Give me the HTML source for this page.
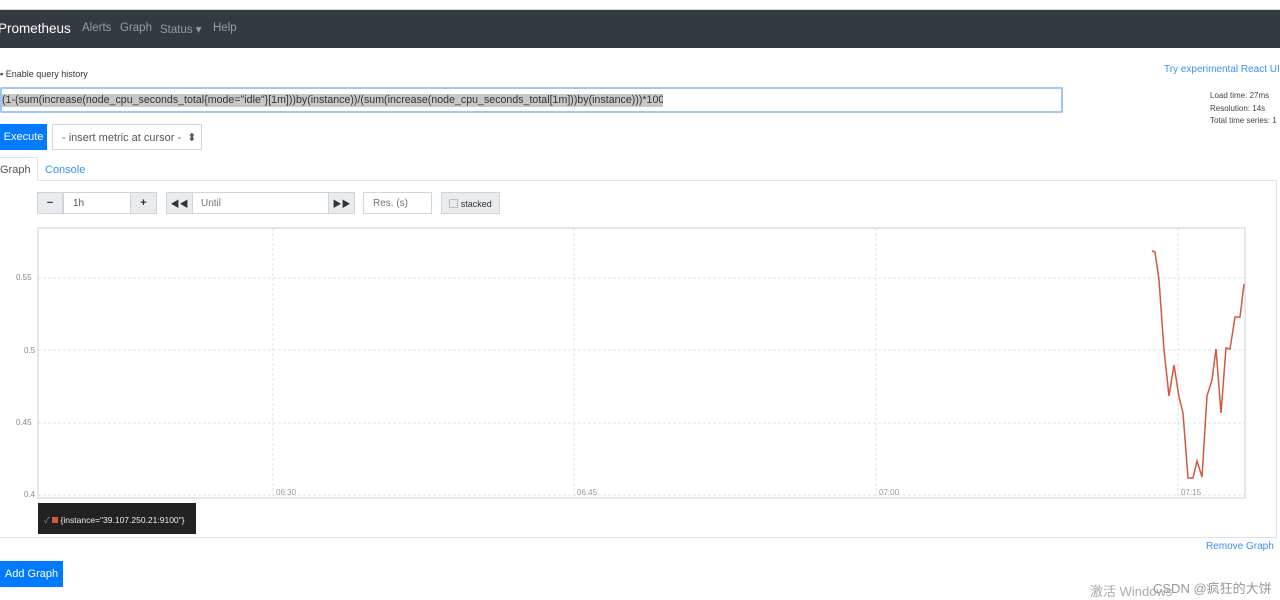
<!DOCTYPE html>
<html><head><meta charset="utf-8"><style>
*{box-sizing:border-box;margin:0;padding:0}
body{width:1280px;height:599px;overflow:hidden;background:#fff;font-family:"Liberation Sans","Noto Sans CJK SC",sans-serif;position:relative;color:#212529}
.a{position:absolute}
.nav{left:0;top:10px;width:1280px;height:38px;background:#343a40}
.nav span{position:absolute;top:12px;font-size:11.5px;color:#9a9da0}
.btn{background:#007bff;color:#fff;font-size:11px;display:flex;align-items:center;justify-content:center}
.box{border:1px solid #ced4da;background:#fff;font-size:10px;color:#6c757d;display:flex;align-items:center}
.g{background:#e9ecef;border:1px solid #ced4da;display:flex;align-items:center;justify-content:center;font-size:11px;font-weight:bold;color:#333}
.yl{font-size:8px;color:#888;left:16px}
.xl{font-size:8px;color:#999}
</style></head><body>
<div class="a" style="left:0;top:0;width:1280px;height:10px;background:#fff;border-bottom:1px solid #ddd"></div>
<div class="a nav">
<span style="left:-2px;top:11px;font-size:13.5px;color:#fff">Prometheus</span>
<span style="left:82px">Alerts</span><span style="left:120px">Graph</span><span style="left:160px">Status ▾</span><span style="left:213px">Help</span>
</div>
<div class="a" style="left:0;top:69px;font-size:9px;color:#333">▪ Enable query history</div>
<div class="a" style="left:1164px;top:64px;font-size:10px;color:#3a8ff5">Try experimental React UI</div>
<div class="a" style="left:0;top:87px;width:1063px;height:26px;border:2px solid #9ec5fb;border-radius:2px;background:#fff"></div>
<div class="a" style="left:2px;top:94px;width:661px;height:13px;background:#c8c8c8;font-size:10.6px;color:#333;line-height:13px;white-space:nowrap;overflow:hidden;letter-spacing:0.02px">(1-(sum(increase(node_cpu_seconds_total{mode="idle"}[1m]))by(instance))/(sum(increase(node_cpu_seconds_total[1m]))by(instance)))*100</div>
<div class="a" style="left:1210px;top:90px;font-size:8px;color:#444;line-height:12.5px">Load time: 27ms<br>Resolution: 14s<br>Total time series: 1</div>
<div class="a btn" style="left:0;top:124px;width:47px;height:26px">Execute</div>
<div class="a box" style="left:52px;top:124px;width:150px;height:26px;font-size:11px;color:#555;padding-left:9px">- insert metric at cursor - &nbsp;⬍</div>
<div class="a" style="left:0;top:157px;width:38px;height:24px;border:1px solid #dee2e6;border-bottom:none;border-left:none;background:#fff;font-size:11px;color:#555;padding:6px 0 0 0">Graph</div>
<div class="a" style="left:45px;top:164px;font-size:11px;color:#3a8ff5">Console</div>
<div class="a" style="left:38px;top:180px;width:1239px;height:358px;border:1px solid #dee2e6;border-left:none"></div>
<div class="a" style="left:0;top:537px;width:38px;height:1px;background:#dee2e6"></div>
<div class="a g" style="left:37px;top:192px;width:26px;height:22px">−</div>
<div class="a box" style="left:63px;top:192px;width:68px;height:22px;padding-left:9px;color:#555">1h</div>
<div class="a g" style="left:130px;top:192px;width:27px;height:22px">+</div>
<div class="a g" style="left:166px;top:192px;width:27px;height:22px;font-size:9px">◀◀</div>
<div class="a box" style="left:192px;top:192px;width:137px;height:22px;padding-left:8px">Until</div>
<div class="a g" style="left:328px;top:192px;width:27px;height:22px;font-size:9px">▶▶</div>
<div class="a box" style="left:363px;top:192px;width:69px;height:22px;padding-left:9px">Res. (s)</div>
<div class="a g" style="left:441px;top:192px;width:59px;height:22px;font-weight:normal;font-size:9px">▢ stacked</div>
<svg class="a" style="left:0;top:220px" width="1280" height="290">
<g stroke="#e2e2e2" stroke-dasharray="3,2" stroke-width="1">
<line x1="38" y1="58" x2="1245" y2="58"/><line x1="38" y1="130" x2="1245" y2="130"/><line x1="38" y1="203" x2="1245" y2="203"/><line x1="38" y1="275" x2="1245" y2="275"/>
<line x1="273" y1="8" x2="273" y2="278"/><line x1="574" y1="8" x2="574" y2="278"/><line x1="876" y1="8" x2="876" y2="278"/><line x1="1178" y1="8" x2="1178" y2="278"/>
</g>
<rect x="38" y="8" width="1207" height="270" fill="none" stroke="#ccc"/>
<polyline fill="none" stroke="#d05a3f" stroke-width="1.5" points="1152,31 1155,32 1159,60 1164,130 1169,176 1174,145 1179,177 1183,193 1188,258 1193,258 1197,241 1202,257 1207,176 1212,160 1216,129 1221,193 1226,128 1230,129 1235,97 1240,97 1244,64"/>
</svg>
<div class="a yl" style="top:273px">0.55</div>
<div class="a yl" style="top:346px;left:24px">0.5</div>
<div class="a yl" style="top:418px">0.45</div>
<div class="a yl" style="top:490px;left:24px">0.4</div>
<div class="a xl" style="left:276px;top:488px">06:30</div>
<div class="a xl" style="left:577px;top:488px">06:45</div>
<div class="a xl" style="left:879px;top:488px">07:00</div>
<div class="a xl" style="left:1181px;top:488px">07:15</div>
<div class="a" style="left:38px;top:503px;width:158px;height:31px;background:#222;color:#eee;font-size:8.5px;padding:11px 0 0 6px;white-space:nowrap"><span style="color:#888">✓</span> <span style="display:inline-block;width:6px;height:6px;background:#d05a3f"></span> {instance="39.107.250.21:9100"}</div>
<div class="a" style="left:1206px;top:541px;font-size:10px;color:#3a8ff5">Remove Graph</div>
<div class="a btn" style="left:0;top:561px;width:63px;height:26px">Add Graph</div>
<div class="a" style="left:1090px;top:581px;font-size:13px;color:#aaa">激活 Windows</div>
<div class="a" style="left:1153px;top:578px;font-size:13px;color:#999">CSDN @疯狂的大饼</div>
</body></html>
